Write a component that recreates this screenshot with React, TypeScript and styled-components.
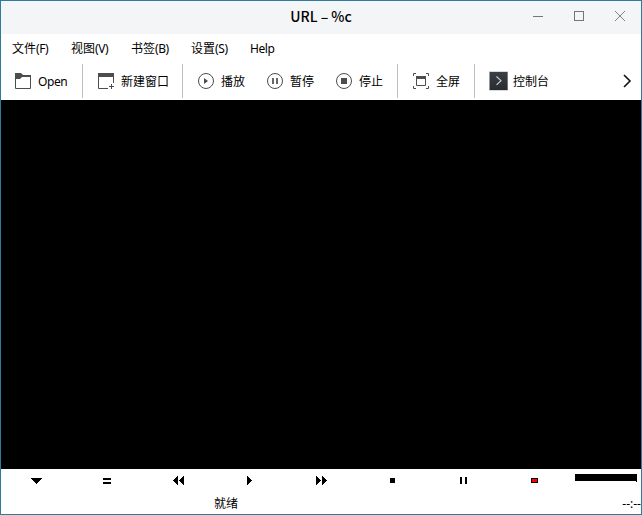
import React from "react";
import styled, { createGlobalStyle } from "styled-components";

const Global = createGlobalStyle`
  * { box-sizing: border-box; }
  body { margin: 0; background: #fff; }
  svg { display: block; flex: none; }
`;

const Window = styled.div`
  width: 642px;
  height: 515px;
  display: flex;
  flex-direction: column;
  overflow: hidden;
  border: 1px solid #2d7d9a;
  background: #fff;
  color: #000;
  font: 12px/18px "Noto Sans", "Noto Sans CJK SC", sans-serif;
  white-space: nowrap;
`;

const TitleBar = styled.header`
  height: 33px;
  flex: none;
  display: grid;
  grid-template-columns: 1fr auto 1fr;
  background: #f4f5f7;
`;

const Title = styled.h1`
  grid-column: 2;
  margin: 0;
  font-family: "Noto Sans CJK SC", sans-serif;
  font-size: 14px;
  font-weight: 500;
  line-height: 31px;
`;

const WindowButtons = styled.div`
  display: flex;
  justify-content: flex-end;
  padding: 8px 13px 0 0;
`;

const MenuBar = styled.nav`
  height: 30px;
  flex: none;
  display: flex;
  padding: 6px 0 0 11px;
`;

const MenuItem = styled.span<{ $w: number }>`
  width: ${(p) => p.$w}px;
`;

const Latin = styled.span`
  letter-spacing: -0.4px;
`;

const ToolBar = styled.div`
  height: 36px;
  flex: none;
  display: flex;
  align-items: flex-start;
`;

const ToolGroup = styled.div<{ $w: number; $last?: boolean }>`
  width: ${(p) => p.$w}px;
  height: 34px;
  display: flex;
  border-right: ${(p) => (p.$last ? "none" : "1px solid #bdbdbd")};
`;

const Tool = styled.div<{ $w?: number; $pad?: number; $gap?: number }>`
  width: ${(p) => (p.$w ? `${p.$w}px` : "auto")};
  height: 34px;
  padding-left: ${(p) => p.$pad ?? 15}px;
  display: flex;
  align-items: center;
  gap: ${(p) => p.$gap ?? 7}px;
`;

const Label = styled.span`
  padding-top: 2px;
`;

const More = styled.div`
  margin-left: auto;
  padding: 9px 9px 0 0;
`;

const Screen = styled.main`
  height: 369px;
  flex: none;
  background: #000;
`;

const Transport = styled.div`
  height: 24px;
  flex: none;
  display: grid;
  grid-template-columns: repeat(8, 71.2px) 1fr;
`;

const Cell = styled.div<{ $nudge?: number }>`
  display: flex;
  justify-content: center;
  padding: 6px ${(p) => p.$nudge ?? 0}px 0 0;
`;

const Volume = styled.div`
  padding: 5px 0 0 4.4px;
`;

const StatusBar = styled.footer`
  flex: 1;
  display: grid;
  grid-template-columns: 450px 1fr;
  line-height: 22px;
`;

const Status = styled.span`
  text-align: center;
`;

const Time = styled.span`
  text-align: right;
`;

const Icon = ({ children }: { children: React.ReactNode }) => (
  <svg width="16" height="16" viewBox="0 0 16 16" fill="none" stroke="#4d4d4d">
    {children}
  </svg>
);

const Glyph = ({ w, d }: { w: number; d: string }) => (
  <svg width={w} height="10" viewBox={`0 0 ${w} 10`} shapeRendering="crispEdges">
    <path d={d} />
  </svg>
);

const glyphs: [number, string, number][] = [
  [11, "M0 3h11v1h-1v1h-1v1h-1v1h-1v1h-1v1h-1v-1h-1v-1h-1v-1h-1v-1h-1v-1h-1z", 0],
  [8, "M0 3h8v2h-8zM0 7h8v2h-8z", 2],
  [11, "M5 1v9h-1v-1h-1v-1h-1v-1h-1v-1h-1v-1h1v-1h1v-1h1v-1h1v-1zM11 1v9h-1v-1h-1v-1h-1v-1h-1v-1h-1v-1h1v-1h1v-1h1v-1h1v-1z", 0],
  [5, "M0 1h1v1h1v1h1v1h1v1h1v1h-1v1h-1v1h-1v1h-1v1h-1z", 2],
  [11, "M0 1h1v1h1v1h1v1h1v1h1v1h-1v1h-1v1h-1v1h-1v1h-1zM6 1h1v1h1v1h1v1h1v1h1v1h-1v1h-1v1h-1v1h-1v1h-1z", 0],
  [5, "M0 3h5v5h-5z", 0],
  [7, "M0 2h2v7h-2zM5 2h2v7h-2z", 0],
];

export default function App() {
  return (
    <>
      <Global />
      <Window>
        <TitleBar>
          <Title>URL – %c</Title>
          <WindowButtons>
            <svg width="96" height="14" viewBox="0 0 96 14" fill="none" stroke="#747678">
              <path d="M1 7.5h10M42.5 2.5h9v9h-9z" shapeRendering="crispEdges" />
              <path d="M83 2l10 10M93 2L83 12" strokeWidth=".9" />
            </svg>
          </WindowButtons>
        </TitleBar>
        <MenuBar>
          <MenuItem $w={59}>文件<Latin>(F)</Latin></MenuItem>
          <MenuItem $w={60}>视图<Latin>(V)</Latin></MenuItem>
          <MenuItem $w={60}>书签<Latin>(B)</Latin></MenuItem>
          <MenuItem $w={59}>设置<Latin>(S)</Latin></MenuItem>
          <MenuItem $w={40}><Latin>Help</Latin></MenuItem>
        </MenuBar>
        <ToolBar>
          <ToolGroup $w={82}>
            <Tool $pad={14}>
              <Icon>
                <path d="M.5 3v12.5h15V3.5H6" />
                <path d="M0 0h6l2 2h8v2H7L5 6H0z" fill="#4d4d4d" stroke="none" />
              </Icon>
              <Label><Latin>Open</Latin></Label>
            </Tool>
          </ToolGroup>
          <ToolGroup $w={100}>
            <Tool>
              <Icon>
                <path d="M10 15.5H.5V1M15.5 1v9M11 13.5h5M13.5 11v5" />
                <path d="M0 0h16v4H0z" fill="#4d4d4d" stroke="none" />
              </Icon>
              <Label>新建窗口</Label>
            </Tool>
          </ToolGroup>
          <ToolGroup $w={215}>
            <Tool $w={69}>
              <Icon>
                <circle cx="8" cy="8" r="7.5" />
                <path d="M6 5l4 3-4 3z" fill="#4d4d4d" stroke="none" />
              </Icon>
              <Label>播放</Label>
            </Tool>
            <Tool $w={69}>
              <Icon>
                <circle cx="8" cy="8" r="7.5" />
                <path d="M6 5v6M10 5v6" strokeWidth="1.7" />
              </Icon>
              <Label>暂停</Label>
            </Tool>
            <Tool $w={69}>
              <Icon>
                <circle cx="8" cy="8" r="7.5" />
                <path d="M5 5h6v6H5z" fill="#4d4d4d" stroke="none" />
              </Icon>
              <Label>停止</Label>
            </Tool>
          </ToolGroup>
          <ToolGroup $w={77}>
            <Tool>
              <Icon>
                <path d="M3.5 4v8.5h9V4M.5 3V.5H3M13 .5h2.5V3M.5 13v2.5H3M13 15.5h2.5V13" />
                <path d="M3 3h10v3H3z" fill="#4d4d4d" stroke="none" />
              </Icon>
              <Label>全屏</Label>
            </Tool>
          </ToolGroup>
          <ToolGroup $w={90} $last>
            <Tool $pad={14} $gap={5}>
              <svg width="19" height="20" viewBox="0 0 19 20" fill="none">
                <defs>
                  <linearGradient id="console" x2="0" y2="1">
                    <stop stopColor="#3b4045" />
                    <stop offset="1" stopColor="#292c2f" />
                  </linearGradient>
                </defs>
                <path d="M0 0h19v20H0z" fill="#d8d9da" />
                <path d="M.6 1h18v18h-18z" fill="url(#console)" />
                <path d="M7.5 5.5l4.5 4.2-4.5 4.2" stroke="#d0d4d6" strokeWidth="1.1" />
              </svg>
              <Label>控制台</Label>
            </Tool>
          </ToolGroup>
          <More>
            <svg width="9" height="16" viewBox="0 0 9 16" fill="none" stroke="#111" strokeWidth="1.6">
              <path d="M1 2l6 6-6 6" />
            </svg>
          </More>
        </ToolBar>
        <Screen />
        <Transport>
          {glyphs.map(([w, d, nudge], i) => (
            <Cell key={i} $nudge={nudge}><Glyph w={w} d={d} /></Cell>
          ))}
          <Cell>
            <svg width="7" height="10" viewBox="0 0 7 10" shapeRendering="crispEdges">
              <path d="M0 3h7v5H0z" />
              <path d="M1 4h5v3H1z" fill="#f00" />
            </svg>
          </Cell>
          <Volume>
            <svg width="62" height="8" viewBox="0 0 62 8" shapeRendering="crispEdges">
              <path d="M0 0h62v8h-1v-1H0z" />
            </svg>
          </Volume>
        </Transport>
        <StatusBar>
          <Status>就绪</Status>
          <Time>--:--</Time>
        </StatusBar>
      </Window>
    </>
  );
}
